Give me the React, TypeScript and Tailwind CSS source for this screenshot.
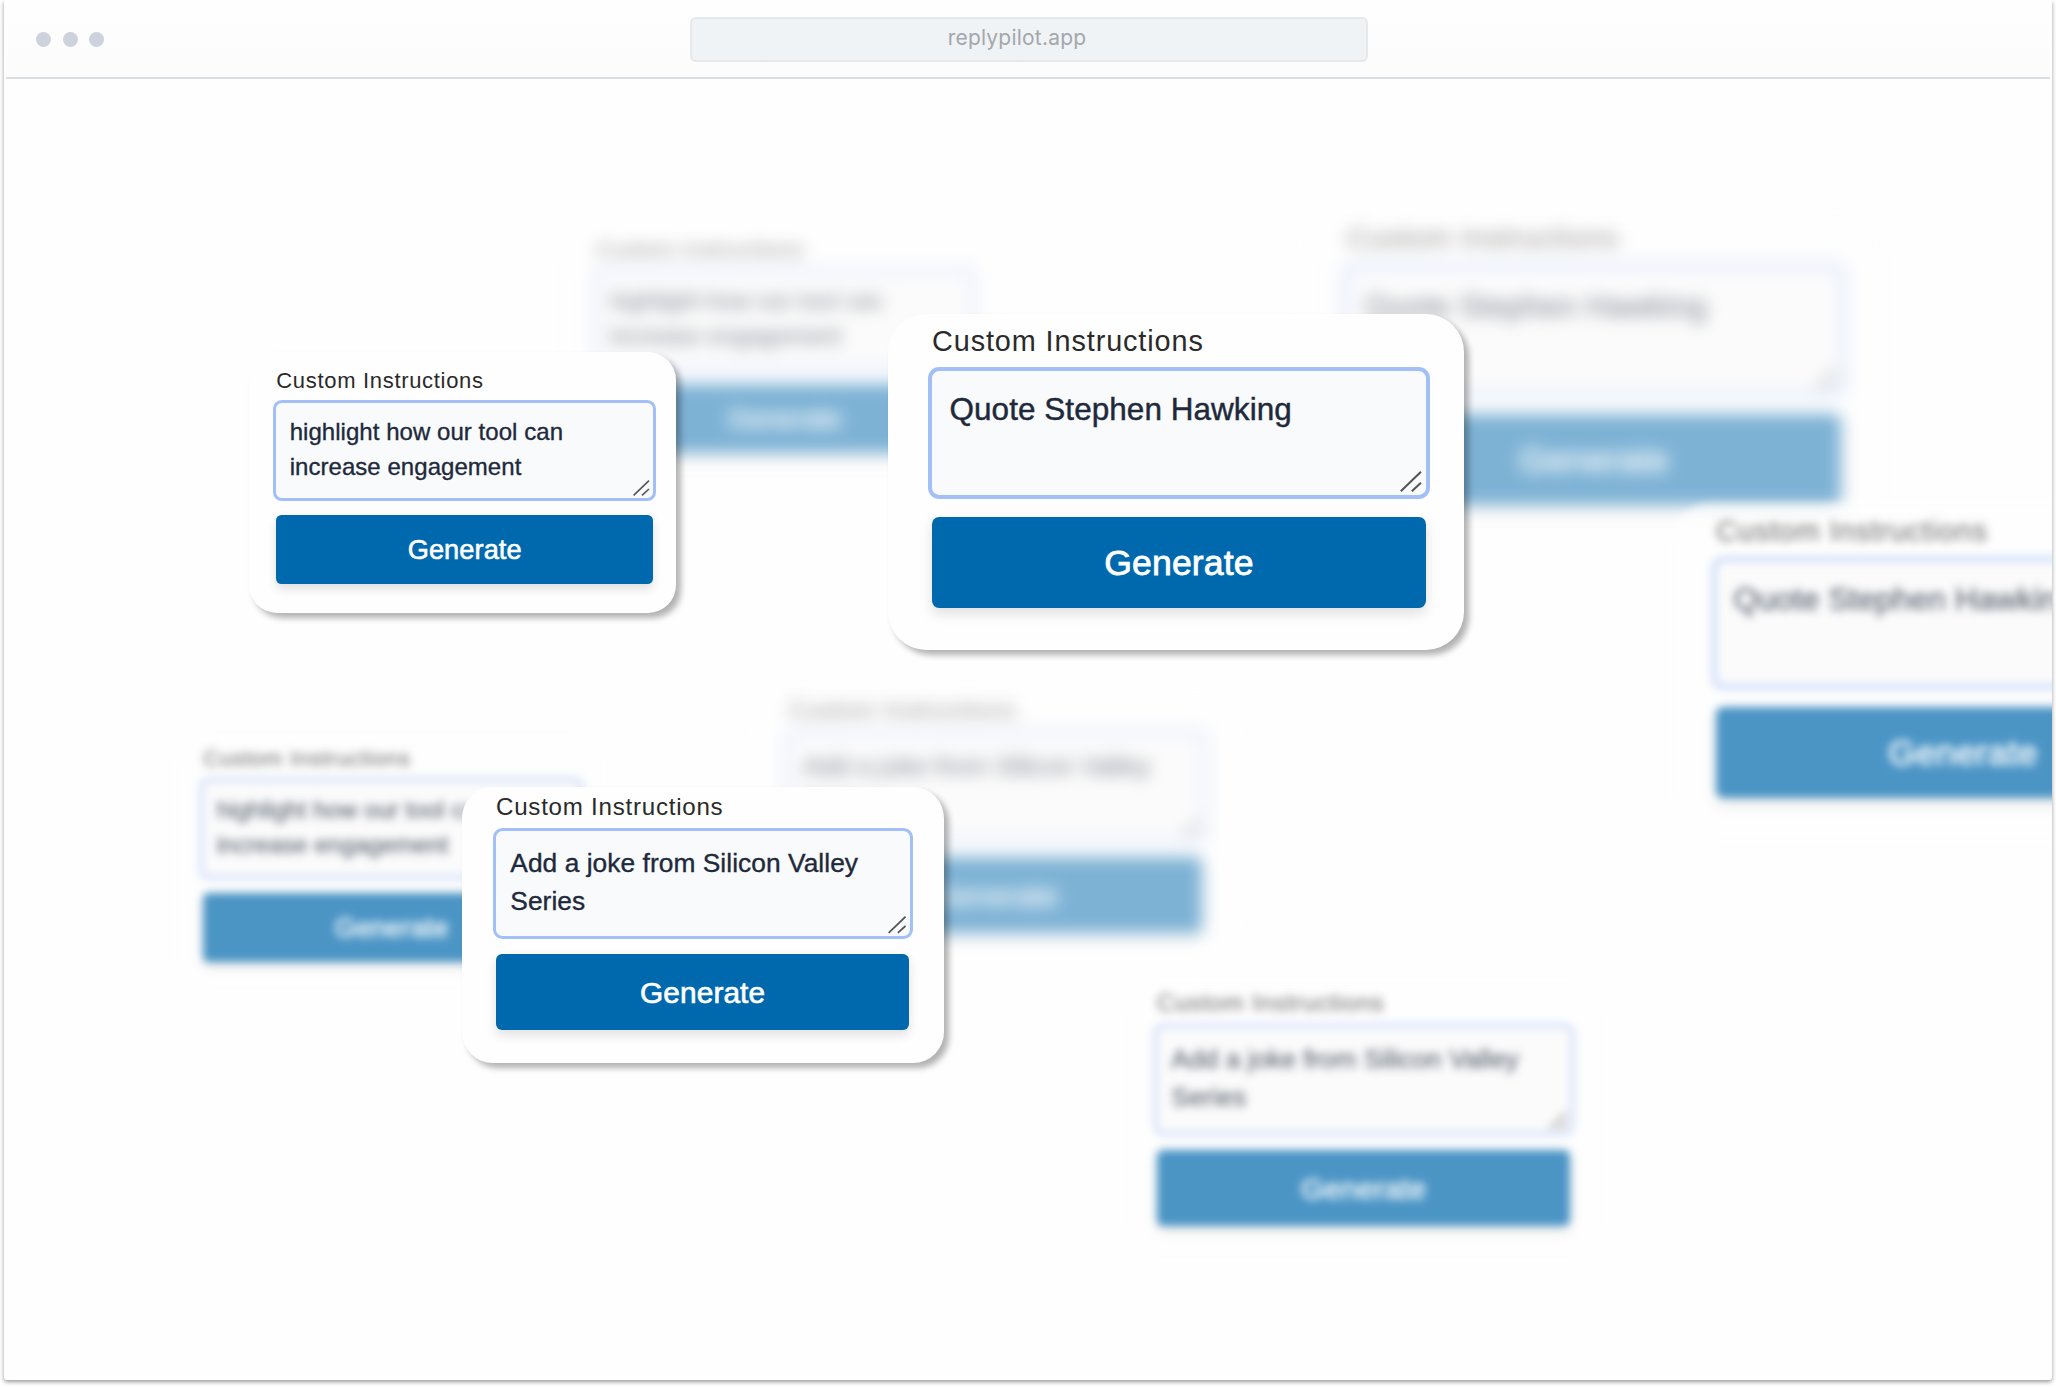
import clsx from "clsx";

type Size = "sm" | "md" | "lg";
type Depth = "front" | "middle" | "back";

const sizes: Record<Size, string> = {
  sm: "text-[24px] rounded-[28px] pt-[13.5px] pl-[27.3px] pr-[23px] pb-[29.7px]",
  md: "text-[26.32px] rounded-[31px] pt-[3.8px] pl-[34px] pr-[34.5px] pb-[33.3px]",
  lg: "text-[31.46px] rounded-[38px] pt-[7.8px] pl-[44px] pr-[38px] pb-[42.3px]",
};

const depths: Record<Depth, string> = {
  front: "shadow-[5px_5px_6px_rgba(0,0,0,0.3)]",
  middle: "opacity-70 blur-[4px]",
  back: "opacity-50 blur-[8px]",
};

const cards: { text: string; size: Size; depth: Depth; place: string }[] = [
  { text: "highlight how our tool can increase engagement", size: "sm", depth: "back", place: "left-[565px] top-[142px]" },
  { text: "Quote Stephen Hawking", size: "lg", depth: "back", place: "left-[1299px] top-[132px]" },
  { text: "Add a joke from Silicon Valley Series", size: "md", depth: "back", place: "left-[751px] top-[611px]" },
  { text: "highlight how our tool can increase engagement", size: "sm", depth: "middle", place: "left-[172px] top-[651px]" },
  { text: "Quote Stephen Hawking", size: "lg", depth: "middle", place: "left-[1668px] top-[425px]" },
  { text: "Add a joke from Silicon Valley Series", size: "md", depth: "middle", place: "left-[1119px] top-[904px]" },
  { text: "highlight how our tool can increase engagement", size: "sm", depth: "front", place: "left-[245px] top-[273px]" },
  { text: "Quote Stephen Hawking", size: "lg", depth: "front", place: "left-[884px] top-[235px]" },
  { text: "Add a joke from Silicon Valley Series", size: "md", depth: "front", place: "left-[458px] top-[708px]" },
];

function PromptCard({ text, size, depth, place }: (typeof cards)[number]) {
  return (
    <section className={clsx("absolute bg-[#fefefe]", sizes[size], depths[depth], place)}>
      <div className="w-[15.7em]">
        <div className="mb-[0.19em] text-[0.917em] leading-[1.364] tracking-[0.031em] text-[#2a2a2a]">
          Custom Instructions
        </div>
        <div
          className={clsx(
            "relative -mx-[0.13em] h-[4.22em] rounded-[0.36em] border-[0.14em] border-[#a3bff8] pt-[0.52em] pl-[0.56em] leading-[1.435] tracking-[0.002em] text-[#1e293b] [-webkit-text-stroke:0.014em_#1e293b]",
            depth === "front" ? "bg-[#f8fafc]" : "bg-[#fafafb]",
          )}
        >
          {text}
          <svg
            viewBox="0 0 17 16"
            className="absolute right-[0.12em] bottom-[0.1em] h-[0.667em] w-[0.708em]"
            fill="none"
            stroke="#555"
            strokeWidth="1.6"
          >
            <path d="M0.6 15.4 L16 0.6 M9 15.4 L16 9" />
          </svg>
        </div>
        <div className="mt-[0.5em] flex h-[2.537em] items-center justify-center rounded-[0.2em] bg-[#0069ae] pt-[0.07em] text-[1.133em] tracking-[0.003em] text-white shadow-[0_0.15em_0.35em_rgba(0,0,0,0.12)] [-webkit-text-stroke:0.022em_#fff]">
          Generate
        </div>
      </div>
    </section>
  );
}

export default function App() {
  return (
    <div className="h-[1387px] w-[2056px] overflow-hidden bg-white px-1 pb-2 font-['Liberation_Sans',Arial,sans-serif]">
      <div className="flex h-[1380px] flex-col rounded-b-[3px] bg-[#fefefe] shadow-[0_2px_4px_rgba(0,0,0,0.4)]">
        <header className="mx-0.5 grid h-[79px] shrink-0 grid-cols-[1fr_678px_1fr] items-center border-b-2 border-[#d9dee0] bg-linear-to-b from-[#fefefe] to-[#fcfcfd] pt-0.5">
          <div className="flex gap-[11.5px] pl-[30px]">
            <span className="size-[15px] rounded-full bg-[#cdd2dd]" />
            <span className="size-[15px] rounded-full bg-[#cdd2dd]" />
            <span className="size-[15px] rounded-full bg-[#cdd2dd]" />
          </div>
          <div className="ml-px -mr-px flex h-[45px] items-center justify-center rounded-md border-2 border-[#e5e9ec] bg-[#f0f3f6] pr-6 pb-[3px] font-[Inter,sans-serif] text-[21px] tracking-[0.01em] text-[#a3a7ab]">
            replypilot.app
          </div>
        </header>
        <main className="relative grow overflow-hidden">
          {cards.map((card) => (
            <PromptCard key={card.place} {...card} />
          ))}
        </main>
      </div>
    </div>
  );
}
